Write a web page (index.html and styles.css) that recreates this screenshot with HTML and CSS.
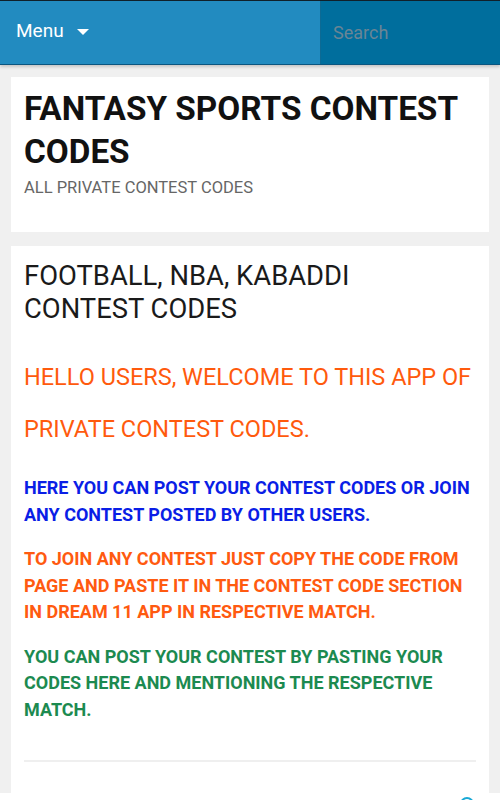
FILE: index.html
```html
<!DOCTYPE html>
<html lang="en">
<head>
<meta charset="utf-8">
<title>Fantasy Sports Contest Codes</title>
<link rel="stylesheet" href="styles.css">
</head>
<body>
<header class="topbar">
  <div class="menu">
    <span class="menu-label">Menu</span>
    <span class="caret"></span>
  </div>
  <div class="search">
    <input class="search-input" type="text" placeholder="Search">
  </div>
</header>
<main class="page">
  <section class="card brand">
    <h1 class="site-title">FANTASY SPORTS CONTEST CODES</h1>
    <p class="site-desc">ALL PRIVATE CONTEST CODES</p>
  </section>
  <article class="card post">
    <h2 class="post-title">FOOTBALL, NBA, KABADDI CONTEST CODES</h2>
    <p class="welcome">HELLO USERS, WELCOME TO THIS APP OF PRIVATE CONTEST CODES.</p>
    <p class="note blue">HERE YOU CAN POST YOUR CONTEST CODES OR JOIN ANY CONTEST POSTED BY OTHER USERS.</p>
    <p class="note orange">TO JOIN ANY CONTEST JUST COPY THE CODE FROM PAGE AND PASTE IT IN THE CONTEST CODE SECTION IN DREAM 11 APP IN RESPECTIVE MATCH.</p>
    <p class="note green">YOU CAN POST YOUR CONTEST BY PASTING YOUR CODES HERE AND MENTIONING THE RESPECTIVE MATCH.</p>
    <hr class="divider">
    <div class="spacer"></div>
  </article>
</main>
<div class="bottom-bar"><span class="bottom-icon"></span></div>
</body>
</html>
```

FILE: styles.css
```css
* { box-sizing: border-box; }
html, body { margin: 0; padding: 0; }
body {
  background: #f0f0f0;
  font-family: Roboto, "Liberation Sans", Arial, sans-serif;
  color: #222;
}
.topbar {
  display: flex;
  height: 65px;
  border-top: 1px solid #10202a;
  border-bottom: 1px solid #0b5680;
  background: #228bc0;
  box-shadow: 0 2px 3px rgba(0,0,0,0.18);
}
.menu {
  flex: 0 0 320px;
  display: flex;
  align-items: center;
  padding-left: 16px;
  gap: 13px;
  color: #fff;
}
.menu-label {
  font-size: 19px;
  line-height: 24px;
  margin-top: -4px;
}
.caret {
  width: 0;
  height: 0;
  border-left: 6px solid transparent;
  border-right: 6px solid transparent;
  border-top: 6px solid #fff;
  margin-top: -2px;
}
.search {
  flex: 1;
  background: #006e9d;
  border-left: 1px solid #0d6a94;
  display: flex;
  align-items: center;
}
.search-input {
  width: 100%;
  border: 0;
  background: transparent;
  outline: none;
  font-family: Roboto, "Liberation Sans", Arial, sans-serif;
  font-size: 18px;
  padding: 0 12px;
  color: #fff;
}
.search-input::placeholder { color: #6a8595; }
.page {
  padding: 12px 11px 0;
  display: flex;
  flex-direction: column;
  gap: 14px;
}
.card {
  background: #fff;
  padding: 10px 13px;
}
.brand { min-height: 155px; }
.site-title {
  margin: 0;
  font-size: 33.3px;
  line-height: 43px;
  font-weight: 700;
  color: #111;
}
.site-desc {
  margin: 5px 0 0;
  font-size: 16.5px;
  line-height: 20px;
  color: #666;
}
.post-title {
  margin: 4px 0 0;
  padding-right: 30px;
  font-size: 27.4px;
  line-height: 33px;
  font-weight: 400;
  color: #1a1a1a;
}
.welcome {
  margin: 25px 0 0;
  font-size: 23.5px;
  line-height: 52px;
  color: #ff5a0d;
}
.note {
  margin: 18px 0 0;
  font-size: 18px;
  line-height: 26.5px;
  font-weight: 700;
}
.note.blue { margin-top: 20px; color: #0a1ee6; }
.note.orange { color: #ff5a10; }
.note.green { color: #1c8a50; }
.divider {
  margin: 37px 0 0;
  border: 0;
  height: 2px;
  background: #efefef;
}
.spacer { height: 60px; }
.bottom-bar {
  position: fixed;
  left: 0;
  right: 0;
  bottom: 0;
  height: 7px;
  background: #fff;
  overflow: hidden;
}
.bottom-icon {
  position: absolute;
  left: 460px;
  top: 4px;
  width: 14px;
  height: 14px;
  border: 2px solid #19a9d6;
  border-radius: 50%;
}
```
